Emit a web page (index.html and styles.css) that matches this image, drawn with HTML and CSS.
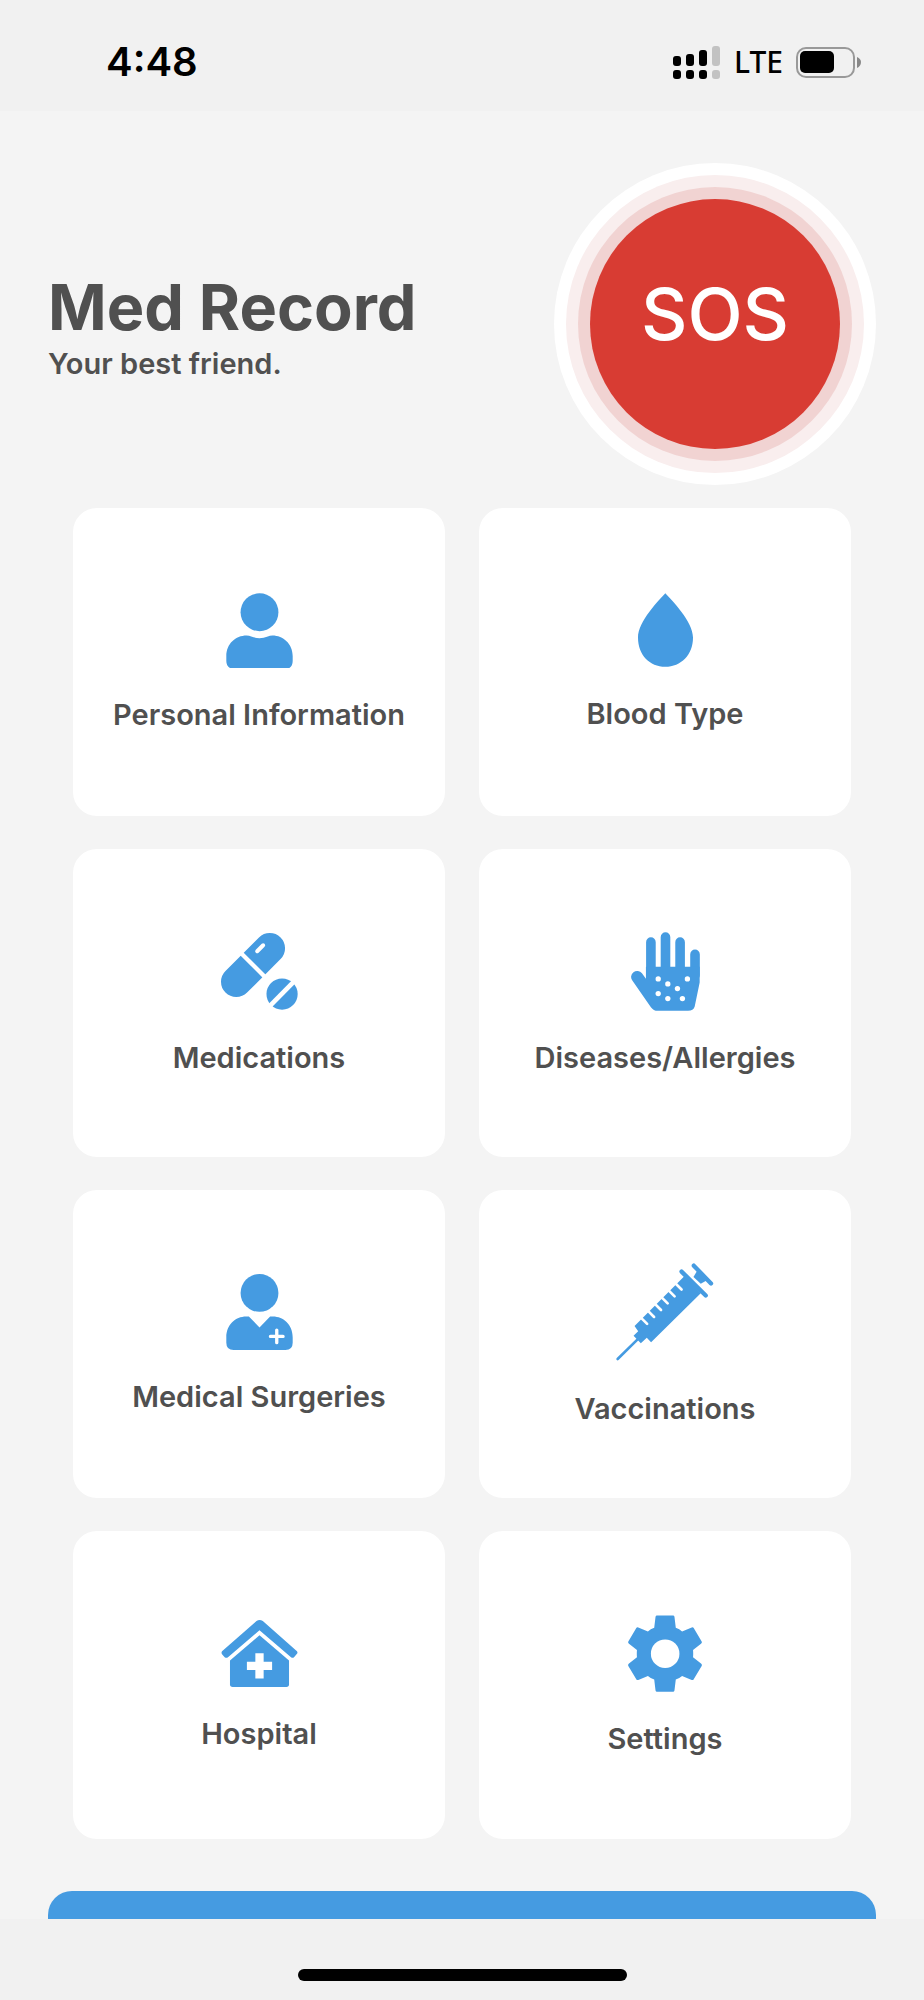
FILE: index.html
```html
<!DOCTYPE html>
<html lang="en">
<head>
    <meta charset="UTF-8">
    <meta name="viewport" content="width=device-width, initial-scale=1.0">
    <title>Med Record</title>
    <link rel="stylesheet" href="styles.css">
</head>
<body>
    <div class="status-bar">
        <span class="time">4:48</span>
        <div class="status-icons">
            <svg width="48" height="33" viewBox="0 0 48 33">
                <rect x="0" y="10" width="8" height="10" rx="3"/>
                <rect x="13" y="8" width="8" height="12" rx="3"/>
                <rect x="26" y="4" width="8" height="16" rx="3"/>
                <rect x="39" y="0" width="8" height="20" rx="3" fill="#c2c2c2"/>
                <rect x="0" y="24" width="8" height="9" rx="3"/>
                <rect x="13" y="24" width="8" height="9" rx="3"/>
                <rect x="26" y="24" width="8" height="9" rx="3"/>
                <rect x="39" y="24" width="8" height="9" rx="3" fill="#c2c2c2"/>
            </svg>
            <span class="network">LTE</span>
            <svg width="65" height="31" viewBox="0 0 65 31">
                <rect x="1" y="1" width="57" height="29" rx="9" fill="none" stroke="#999" stroke-width="2"/>
                <rect x="4" y="4" width="34" height="22" rx="5"/>
                <path d="M61 10Q65 12 65 15Q65 19 61 21Z" fill="#888"/>
            </svg>
        </div>
    </div>

    <main class="content">
        <header class="header">
            <div>
                <h1>Med Record</h1>
                <p>Your best friend.</p>
            </div>
            <button class="sos">SOS</button>
        </header>

        <nav class="cards">
            <a href="#personal" class="card">
                <svg width="67" height="75" viewBox="497 95 200 226">
                    <circle cx="597" cy="153" r="57"/>
                    <path d="M508 321Q497 315 497 300V285C497 248 525 223 558 223Q566 223 572 226Q597 236 622 226Q628 223 636 223C668 223 697 248 697 285V300Q697 315 687 321Z"/>
                </svg>
                <span>Personal Information</span>
            </a>
            <a href="#blood" class="card">
                <svg width="55" height="74" viewBox="114 95 165 221">
                    <path d="M196 95C215 115 279 180 279 228C279 280 243 316 196 316C149 316 114 280 114 228C114 180 177 115 196 95Z"/>
                </svg>
                <span>Blood Type</span>
            </a>
            <a href="#medications" class="card">
                <svg width="77" height="79" viewBox="60 64 232 236">
                    <path class="line" stroke-width="92" stroke-linecap="round" d="M106 213L207 112"/>
                    <path class="cut" stroke-width="13" d="M117 123L197 203"/>
                    <path class="cut" stroke-width="12" stroke-linecap="round" d="M169 121L187 103"/>
                    <circle cx="244" cy="250" r="47"/>
                    <path class="cut" stroke-width="14" d="M200 293L290 202"/>
                </svg>
                <span>Medications</span>
            </a>
            <a href="#allergies" class="card">
                <svg width="69" height="79" viewBox="92 60 208 237">
                    <path class="line" stroke-width="29" stroke-linecap="round" d="M152 90V190M196 75V190M240 90V190M285 127V190"/>
                    <path d="M137 200L125 184A18 18 0 0 0 96 206L152 286Q160 297 172 297H264Q280 297 284 284L299 212V164H137Z"/>
                    <g fill="#fff">
                        <circle cx="174" cy="201" r="8"/>
                        <circle cx="203" cy="216" r="8"/>
                        <circle cx="262" cy="201" r="8"/>
                        <circle cx="232" cy="230" r="8"/>
                        <circle cx="174" cy="245" r="8"/>
                        <circle cx="203" cy="260" r="8"/>
                        <circle cx="247" cy="260" r="8"/>
                    </g>
                </svg>
                <span>Diseases/Allergies</span>
            </a>
            <a href="#surgeries" class="card">
                <svg width="67" height="76" viewBox="77 69 200 229">
                    <circle cx="177" cy="126" r="57"/>
                    <path d="M145 197L177 230L209 197H217C250 197 277 222 277 260V276Q277 298 255 298H99Q77 298 77 276V260C77 222 104 197 137 197Z"/>
                    <path class="cut" stroke-width="10" stroke-linecap="round" d="M229 238V276M210 257H248"/>
                </svg>
                <span>Medical Surgeries</span>
            </a>
            <a href="#vaccinations" class="card">
                <svg width="100" height="100" viewBox="71 61 302 302">
                    <path class="line" stroke-width="8" stroke-linecap="round" d="M79 354L140 294"/>
                    <path d="M130 254L281 103L330 155L180 303L167 290L149 306L127 284L141 270Z"/>
                    <path class="cut" stroke-width="8" stroke-linecap="round" d="M146 226L168 248M167 205L189 227M188 184L210 206M208 164L230 186M229 143L251 165M250 122L272 144"/>
                    <path class="line" stroke-width="13" stroke-linecap="round" d="M272 90L345 162M309 72L361 126"/>
                    <path d="M320 86L308 106L330 127L350 115Z"/>
                </svg>
                <span>Vaccinations</span>
            </a>
            <a href="#hospital" class="card">
                <svg width="77" height="67" viewBox="62 56 230 202">
                    <path d="M168 59Q177 53 187 59L290 150Q293 155 290 158L281 168Q277 172 272 168L177 87L82 168Q77 172 72 168L64 159Q61 155 64 150Z"/>
                    <path d="M177 102L266 178V250Q266 258 258 258H96Q88 258 88 250V178Z"/>
                    <path class="cut" stroke-width="25" d="M177 156V232M139 194H215"/>
                </svg>
                <span>Hospital</span>
            </a>
            <a href="#settings" class="card">
                <svg width="74" height="77" viewBox="80 41 223 231">
                    <path d="M167 42H216Q219 42 220 46L224 79Q235 83 243 90L272 78Q276 76 278 80L302 120Q304 124 300 127L276 146Q277 157 276 168L300 187Q304 190 302 194L278 234Q276 238 272 236L243 224Q235 231 224 235L220 268Q219 272 216 272H167Q164 272 163 268L159 235Q148 231 140 224L111 236Q107 238 105 234L81 194Q79 190 83 187L107 168Q106 157 107 146L83 127Q79 124 81 120L105 80Q107 76 111 78L140 90Q148 83 159 79L163 46Q164 42 167 42Z"/>
                    <circle cx="192" cy="157" r="43" fill="#fff"/>
                </svg>
                <span>Settings</span>
            </a>
        </nav>

        <button class="bottom-btn" aria-label="More"></button>
    </main>

    <footer class="home-bar">
        <div class="home-indicator"></div>
    </footer>
</body>
</html>
```
FILE: styles.css
```css
* {
    box-sizing: border-box;
}
body {
    font-family: Inter, 'Liberation Sans', sans-serif;
    background-color: #f4f4f4;
    color: #505050;
    margin: 0;
    height: 100vh;
    display: flex;
    flex-direction: column;
}
.status-bar {
    background-color: #f1f1f1;
    color: #000;
    padding: 38px 63px 25px 106px;
    display: flex;
    justify-content: space-between;
    align-items: center;
}
.time {
    font-size: 40px;
    font-weight: 600;
    line-height: 48px;
}
.status-icons {
    display: flex;
    align-items: center;
    gap: 13px;
}
.network {
    font-family: 'Noto Sans', sans-serif;
    font-size: 30px;
    font-weight: 500;
    line-height: 48px;
}
/* scrolls between the status bar and the home bar */
.content {
    flex: 1;
    min-height: 0;
    padding: 52px 48px 0;
    overflow-y: auto;
    scrollbar-width: none;
}
.header {
    display: flex;
    justify-content: space-between;
    align-items: center;
}
h1 {
    font-size: 63px;
    line-height: 80px;
    font-weight: 700;
    margin: 0;
}
.header p {
    font-size: 29px;
    line-height: 34px;
    font-weight: 600;
    margin: 0;
}
.sos {
    width: 250px;
    height: 250px;
    margin: 36px;
    padding: 0 0 22px;
    border: none;
    border-radius: 50%;
    background-color: #d83c33;
    box-shadow: 0 0 0 12px #f1d3d2, 0 0 0 24px #f9eeee, 0 0 0 36px #fff;
    color: #fff;
    font-family: inherit;
    font-size: 72px;
    font-weight: 500;
    cursor: pointer;
}
.cards {
    display: grid;
    grid-template-columns: 1fr 1fr;
    gap: 33px 34px;
    padding: 23px 25px 52px;
}
.card {
    height: 308px;
    background-color: #fff;
    border-radius: 24px;
    display: flex;
    flex-direction: column;
    justify-content: center;
    align-items: center;
    gap: 30px;
    color: #505050;
    font-size: 29px;
    line-height: 34px;
    font-weight: 600;
    text-decoration: none;
}
.card svg {
    fill: #459be1;
}
.card .line {
    fill: none;
    stroke: #459be1;
}
.card .cut {
    fill: none;
    stroke: #fff;
}
.bottom-btn {
    display: block;
    width: 100%;
    height: 120px;
    border: none;
    border-radius: 24px;
    background-color: #459be1;
    cursor: pointer;
}
.home-bar {
    background-color: #f1f1f1;
    padding: 50px 0 19px;
}
.home-indicator {
    width: 329px;
    height: 12px;
    margin: 0 auto;
    border-radius: 6px;
    background-color: #000;
}
```
